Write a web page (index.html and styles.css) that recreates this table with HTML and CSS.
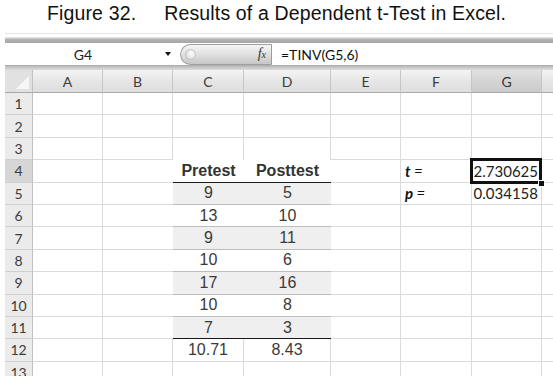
FILE: index.html
```html
<!DOCTYPE html>
<html>
<head>
<meta charset="utf-8">
<link rel="stylesheet" href="styles.css">
</head>
<body>
<div class="title">Figure 32.<span class="gap">Results of a Dependent t-Test in Excel.</span></div>
<div class="sheet">
  <div class="rib"></div>
  <div class="band1"></div>
  <div class="fbar">
    <div class="namebox">G4</div>
    <div class="dd"><span class="tri"></span></div>
    <div class="pill"><span class="knob"></span><span class="fx"><i>f</i><small>x</small></span></div>
    <div class="formula">=TINV(G5,6)</div>
  </div>
  <div class="band2"></div>
  <div class="grid">
    <div class="corner"><svg width="27" height="22" viewBox="0 0 27 22"><polygon points="24,6 24,19 11,19" fill="#f7f7f7"/></svg></div><div class="ch">A</div><div class="ch">B</div><div class="ch">C</div><div class="ch">D</div><div class="ch">E</div><div class="ch">F</div><div class="ch on">G</div><div class="ch"></div>
    <div class="rh">1</div><div class="c"></div><div class="c"></div><div class="c"></div><div class="c"></div><div class="c"></div><div class="c"></div><div class="c"></div><div class="c"></div>
    <div class="rh">2</div><div class="c"></div><div class="c"></div><div class="c"></div><div class="c"></div><div class="c"></div><div class="c"></div><div class="c"></div><div class="c"></div>
    <div class="rh">3</div><div class="c"></div><div class="c"></div><div class="c nb"></div><div class="c nb"></div><div class="c"></div><div class="c"></div><div class="c"></div><div class="c"></div>
    <div class="rh on">4</div><div class="c"></div><div class="c nr"></div><div class="c t th">Pretest</div><div class="c t th">Posttest</div><div class="c"></div><div class="c lab"><b>t</b>&nbsp;=</div><div class="c num cur">2.730625<span class="selbox"><span class="handle"></span></span></div><div class="c"></div>
    <div class="rh">5</div><div class="c"></div><div class="c nr"></div><div class="c t band">9</div><div class="c t band">5</div><div class="c"></div><div class="c lab"><b>p</b>&nbsp;=</div><div class="c num">0.034158</div><div class="c"></div>
    <div class="rh">6</div><div class="c"></div><div class="c nr"></div><div class="c t">13</div><div class="c t">10</div><div class="c"></div><div class="c"></div><div class="c"></div><div class="c"></div>
    <div class="rh">7</div><div class="c"></div><div class="c nr"></div><div class="c t band">9</div><div class="c t band">11</div><div class="c"></div><div class="c"></div><div class="c"></div><div class="c"></div>
    <div class="rh">8</div><div class="c"></div><div class="c nr"></div><div class="c t">10</div><div class="c t">6</div><div class="c"></div><div class="c"></div><div class="c"></div><div class="c"></div>
    <div class="rh">9</div><div class="c"></div><div class="c nr"></div><div class="c t band">17</div><div class="c t band">16</div><div class="c"></div><div class="c"></div><div class="c"></div><div class="c"></div>
    <div class="rh">10</div><div class="c"></div><div class="c nr"></div><div class="c t">10</div><div class="c t">8</div><div class="c"></div><div class="c"></div><div class="c"></div><div class="c"></div>
    <div class="rh">11</div><div class="c"></div><div class="c nr"></div><div class="c t band last">7</div><div class="c t band last">3</div><div class="c"></div><div class="c"></div><div class="c"></div><div class="c"></div>
    <div class="rh">12</div><div class="c"></div><div class="c"></div><div class="c tot">10.71</div><div class="c tot">8.43</div><div class="c"></div><div class="c"></div><div class="c"></div><div class="c"></div>
    <div class="rh">13</div><div class="c"></div><div class="c"></div><div class="c"></div><div class="c"></div><div class="c"></div><div class="c"></div><div class="c"></div><div class="c"></div>
  </div>
</div>
</body>
</html>
```
FILE: styles.css
```css
html, body {
  margin: 0;
  padding: 0;
  background: #fff;
}
body {
  width: 553px;
  height: 376px;
  overflow: hidden;
}
.title {
  height: 33px;
  box-sizing: border-box;
  padding-top: 2px;
  line-height: 22px;
  font-family: "Liberation Sans", Arial, sans-serif;
  font-size: 19.5px;
  letter-spacing: 0.15px;
  color: #111;
  text-align: center;
}
.gap {
  margin-left: 28px;
}
.sheet {
  margin-left: 5px;
  width: 548px;
  overflow: hidden;
}
.rib {
  height: 4px;
  box-sizing: border-box;
  border-top: 1px solid #e6e6e6;
}
.band1 {
  height: 6px;
  background: linear-gradient(#e2e2e2 0, #e2e2e2 1px, #b4b4b4 2px, #a6a6a6 100%);
}
.fbar {
  height: 22px;
  display: flex;
  align-items: center;
  background: #fff;
  font-family: Lato, "Open Sans", sans-serif;
  font-size: 14px;
  color: #111;
}
.namebox {
  width: 156px;
  text-align: center;
  color: #222;
}
.dd {
  width: 19px;
  height: 22px;
  display: flex;
  align-items: center;
  justify-content: center;
}
.tri {
  width: 0;
  height: 0;
  border-left: 3.5px solid transparent;
  border-right: 3.5px solid transparent;
  border-top: 4px solid #111;
  margin-right: 6px;
}
.pill {
  width: 92px;
  height: 21px;
  box-sizing: border-box;
  border: 1px solid #a0a0a0;
  border-right: 1px solid #9c9c9c;
  border-radius: 11px 0 0 11px;
  background: linear-gradient(#f6f6f6, #e0e0e0 50%, #c6c6c6);
  display: flex;
  align-items: center;
  justify-content: space-between;
  padding: 0 5px 0 4px;
}
.knob {
  width: 11px;
  height: 11px;
  border-radius: 50%;
  background: radial-gradient(circle at 60% 40%, #fff, #d0d0d0);
  border: 1px solid #c4c4c4;
  box-sizing: border-box;
}
.fx {
  font-family: "Liberation Serif", serif;
  font-size: 14px;
  color: #333;
}
.fx small {
  font-size: 10px;
  font-style: italic;
}
.formula {
  padding-left: 9px;
  color: #111;
}
.band2 {
  height: 5px;
  background: linear-gradient(#a9a9a9, #c4c4c4 2px, #dcdcdc);
}
.grid {
  display: grid;
  grid-template-columns: 28px 70px 70px 71px 87px 70px 71px 70px 70px;
  grid-template-rows: 23px repeat(13, 22.4px);
  width: 607px;
  font-family: Lato, "Open Sans", sans-serif;
}
.grid > div {
  box-sizing: border-box;
  display: flex;
  align-items: center;
}
.corner {
  background: #e1e1e1;
  border-right: 1px solid #c2c2c2;
  border-bottom: 1px solid #a9a9a9;
}
.ch {
  justify-content: center;
  background: linear-gradient(#f4f4f4, #e6e6e6 50%, #dedede);
  border-right: 1px solid #c6c6c6;
  border-bottom: 1px solid #a9a9a9;
  font-size: 14px;
  color: #3c3c3c;
}
.ch.on {
  background: linear-gradient(#e2e2e2, #d4d4d4 50%, #cbcbcb);
  color: #333;
}
.rh {
  justify-content: center;
  background: #ebebeb;
  border-right: 1px solid #c0c0c0;
  border-bottom: 1px solid #d0d0d0;
  font-size: 14px;
  color: #3c3c3c;
}
.rh.on {
  background: #d6d6d6;
}
.c {
  border-right: 1px solid #dadada;
  border-bottom: 1px solid #dadada;
  font-size: 15px;
  color: #222;
}
.c.nb {
  border-bottom: none;
}
.c.nr {
  border-right: none;
}
.c.t {
  justify-content: center;
  border-right: none;
  border-bottom: 1px solid #bdbdbd;
  font-family: "Liberation Sans", Arial, sans-serif;
  font-size: 16px;
  color: #3a3a3a;
}
.c.t.band {
  background: #efefef;
}
.c.t.th {
  border-bottom: 1px solid #1a1a1a;
  font-weight: bold;
  color: #333;
}
.c.t.last {
  border-bottom: 1px solid #1a1a1a;
}
.c.tot {
  justify-content: center;
  font-family: "Liberation Sans", Arial, sans-serif;
  font-size: 16px;
  color: #3a3a3a;
}
.c.lab {
  padding-left: 4px;
  font-style: italic;
  color: #111;
}
.c.num {
  justify-content: flex-end;
  padding-right: 3px;
  color: #222;
}
.c.cur {
  position: relative;
}
.selbox {
  position: absolute;
  top: -2px;
  left: -2px;
  right: -1px;
  bottom: -2px;
  border: 3px solid #111;
}
.handle {
  position: absolute;
  right: -6px;
  bottom: -6px;
  width: 5px;
  height: 5px;
  background: #111;
  border: 1px solid #fff;
}
```
